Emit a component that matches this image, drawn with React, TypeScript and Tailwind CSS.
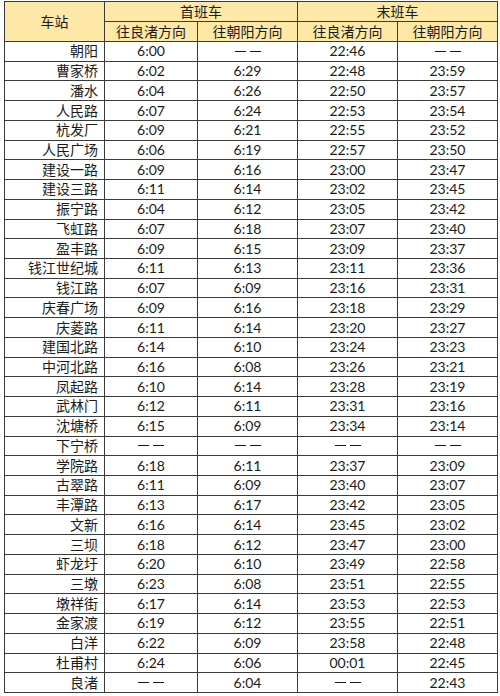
import React from 'react';

type Row = [string, string, string, string, string];

const rows: Row[] = [
  ['朝阳', '6:00', '——', '22:46', '——'],
  ['曹家桥', '6:02', '6:29', '22:48', '23:59'],
  ['潘水', '6:04', '6:26', '22:50', '23:57'],
  ['人民路', '6:07', '6:24', '22:53', '23:54'],
  ['杭发厂', '6:09', '6:21', '22:55', '23:52'],
  ['人民广场', '6:06', '6:19', '22:57', '23:50'],
  ['建设一路', '6:09', '6:16', '23:00', '23:47'],
  ['建设三路', '6:11', '6:14', '23:02', '23:45'],
  ['振宁路', '6:04', '6:12', '23:05', '23:42'],
  ['飞虹路', '6:07', '6:18', '23:07', '23:40'],
  ['盈丰路', '6:09', '6:15', '23:09', '23:37'],
  ['钱江世纪城', '6:11', '6:13', '23:11', '23:36'],
  ['钱江路', '6:07', '6:09', '23:16', '23:31'],
  ['庆春广场', '6:09', '6:16', '23:18', '23:29'],
  ['庆菱路', '6:11', '6:14', '23:20', '23:27'],
  ['建国北路', '6:14', '6:10', '23:24', '23:23'],
  ['中河北路', '6:16', '6:08', '23:26', '23:21'],
  ['凤起路', '6:10', '6:14', '23:28', '23:19'],
  ['武林门', '6:12', '6:11', '23:31', '23:16'],
  ['沈塘桥', '6:15', '6:09', '23:34', '23:14'],
  ['下宁桥', '——', '——', '——', '——'],
  ['学院路', '6:18', '6:11', '23:37', '23:09'],
  ['古翠路', '6:11', '6:09', '23:40', '23:07'],
  ['丰潭路', '6:13', '6:17', '23:42', '23:05'],
  ['文新', '6:16', '6:14', '23:45', '23:02'],
  ['三坝', '6:18', '6:12', '23:47', '23:00'],
  ['虾龙圩', '6:20', '6:10', '23:49', '22:58'],
  ['三墩', '6:23', '6:08', '23:51', '22:55'],
  ['墩祥街', '6:17', '6:14', '23:53', '22:53'],
  ['金家渡', '6:19', '6:12', '23:55', '22:51'],
  ['白洋', '6:22', '6:09', '23:58', '22:48'],
  ['杜甫村', '6:24', '6:06', '00:01', '22:45'],
  ['良渚', '——', '6:04', '——', '22:43'],
];

const head = 'bg-[#fde8a7] flex items-center justify-center text-[14px]';

const App = () => {
  return (
    <div
      className="bg-white w-[500px] h-[696px] pt-px pl-1 text-[#1a1a1a]"
      style={{ fontFamily: '"Lato", "Noto Sans CJK SC", sans-serif' }}
    >
      <div className="grid h-[692px] w-[494px] gap-px p-px bg-[#3a3a3a] grid-cols-[99px_92px_99px_99px_99px] grid-rows-[19px_19px_repeat(33,minmax(0,1fr))] text-[14px] leading-none">
        {/* header */}
        <div className={`${head} row-span-2`}>车站</div>
        <div className={`${head} col-span-2`}>首班车</div>
        <div className={`${head} col-span-2`}>末班车</div>
        <div className={head}>往良渚方向</div>
        <div className={head}>往朝阳方向</div>
        <div className={head}>往良渚方向</div>
        <div className={head}>往朝阳方向</div>

        {/* body */}
        {rows.map((row) => (
          <React.Fragment key={row[0]}>
            <div className="bg-white flex items-center justify-end pr-[6px]">
              {row[0]}
            </div>
            {row.slice(1).map((cell, i) =>
              cell === '——' ? (
                <div key={i} className="bg-white flex items-center justify-center gap-[4px]">
                  <span className="w-[11px] h-px bg-[#1a1a1a]" />
                  <span className="w-[11px] h-px bg-[#1a1a1a]" />
                </div>
              ) : (
                <div key={i} className="bg-white flex items-center justify-center">
                  {cell}
                </div>
              )
            )}
          </React.Fragment>
        ))}
      </div>
    </div>
  );
};

export default App;
